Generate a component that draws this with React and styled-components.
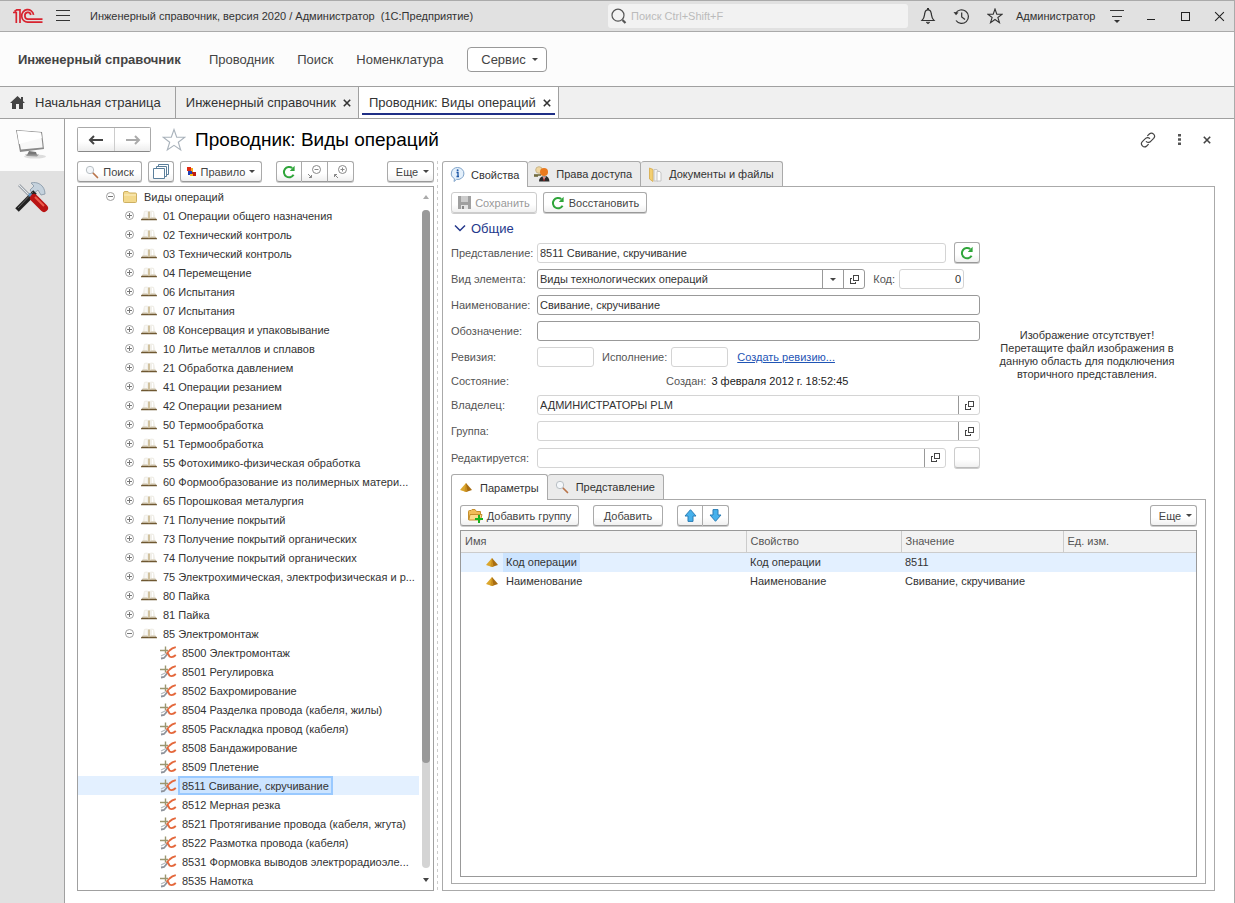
import React from "react";
import styled, { createGlobalStyle, css } from "styled-components";

const folders = [
  "01 Операции общего назначения",
  "02 Технический контроль",
  "03 Технический контроль",
  "04 Перемещение",
  "06 Испытания",
  "07 Испытания",
  "08 Консервация и упаковывание",
  "10 Литье металлов и сплавов",
  "21 Обработка давлением",
  "41 Операции резанием",
  "42 Операции резанием",
  "50 Термообработка",
  "51 Термообработка",
  "55 Фотохимико-физическая обработка",
  "60 Формообразование из полимерных матери...",
  "65 Порошковая металургия",
  "71 Получение покрытий",
  "73 Получение покрытий органических",
  "74 Получение покрытий органических",
  "75 Электрохимическая, электрофизическая и р...",
  "80 Пайка",
  "81 Пайка",
  "85 Электромонтаж",
];

const operations = [
  "8500 Электромонтаж",
  "8501 Регулировка",
  "8502 Бахромирование",
  "8504 Разделка провода (кабеля, жилы)",
  "8505 Раскладка провод (кабеля)",
  "8508 Бандажирование",
  "8509 Плетение",
  "8511 Свивание, скручивание",
  "8512 Мерная резка",
  "8521 Протягивание провода (кабеля, жгута)",
  "8522 Размотка провода (кабеля)",
  "8531 Формовка выводов электрорадиоэле...",
  "8535 Намотка",
];

const params = [
  { name: "Код операции", value: "8511", selected: true },
  { name: "Наименование", value: "Свивание, скручивание" },
];

/* ---------- icons ---------- */

const LogoIcon = () => (
  <svg width="30" height="16" viewBox="0 0 30 16" fill="none" stroke="#d8232f" strokeWidth="1.7">
    <path d="M0 4.500H3.300V15M1.500 3.500 4 1.600M7 15V1.800H3.500" />
    <path d="M20.600 6.800A6 6.300 0 1 0 15 14.200H29.500" />
    <path d="M17.800 7A3 3.400 0 1 0 15 11.200H29.500" />
  </svg>
);

const BurgerIcon = () => (
  <svg width="14" height="12" viewBox="0 0 14 12" stroke="#333" shapeRendering="crispEdges">
    <path d="M0 .5H14M0 5.500H14M0 10.500H14" />
  </svg>
);

const LensIcon = () => (
  <svg width="16" height="16" viewBox="0 0 16 16" fill="none" stroke="#555">
    <circle cx="7" cy="7.200" r="6" strokeWidth="1.200" />
    <path d="M11.500 12 14.500 15" strokeWidth="2.200" />
  </svg>
);

const BellIcon = () => (
  <svg width="16" height="18" viewBox="0 0 16 18" fill="none" stroke="#333" strokeWidth="1.200">
    <path d="M2 13.500C4.500 11 4.300 9 4.700 6.700 5 4.200 6.500 2.800 8 2.800s3 1.400 3.300 3.900C11.700 9 11.500 11 14 13.500Z" />
    <path d="M6 15.200H10L8 17Z" fill="#333" strokeWidth=".5" />
    <path d="M8 1V3" strokeWidth="2" />
  </svg>
);

const HistoryIcon = () => (
  <svg width="17" height="17" viewBox="0 0 17 17" fill="none" stroke="#333" strokeWidth="1.200">
    <path d="M2.600 5.500A6.800 6.800 0 1 1 3 12.500" />
    <path d="M8.700 4.500V9L12 11.500" />
    <path d="M.5 4 3 7.200 5.500 4.500Z" fill="#333" stroke="none" />
  </svg>
);

const StarIcon = ({ size, color }) => (
  <svg width={size} height={size} viewBox="0 0 24 24" fill="none" stroke={color}>
    <path
      strokeWidth="1.1"
      vectorEffect="non-scaling-stroke"
      d="M12 1.500 14.700 9.200 22.800 9.300 16.300 14.200 18.700 22 12 17.300 5.300 22 7.700 14.200 1.200 9.300 9.300 9.200Z"
    />
  </svg>
);

const FilterIcon = () => (
  <svg width="16" height="14" viewBox="0 0 16 14" shapeRendering="crispEdges">
    <path d="M1 1.500H15M3 7.500H13" stroke="#333" />
    <path d="M5 11H11L8 14Z" fill="#333" shapeRendering="auto" />
  </svg>
);

const MinIcon = () => (
  <svg width="10" height="10" viewBox="0 0 10 10">
    <path d="M1 8.500H9" stroke="#222" shapeRendering="crispEdges" />
  </svg>
);

const MaxIcon = () => (
  <svg width="10" height="10" viewBox="0 0 10 10">
    <rect x="1.500" y="1.500" width="8" height="8" fill="none" stroke="#222" shapeRendering="crispEdges" />
  </svg>
);

const CrossIcon = ({ size = 10, width = 1, color = "#333" }) => (
  <svg width={size} height={size} viewBox="0 0 10 10" stroke={color} strokeWidth={width}>
    <path d="M1 1 9 9M9 1 1 9" />
  </svg>
);

const HomeIcon = () => (
  <svg width="15" height="13" viewBox="0 0 15 13" fill="#444">
    <path d="M7.500 0 15 7H13V13H9V8H6V13H2V7H0Z" />
    <path d="M11 1H13V5H11Z" />
  </svg>
);

const LinkIcon = () => (
  <svg width="16" height="16" viewBox="0 0 24 24" fill="none" stroke="#444" strokeWidth="1.800" strokeLinecap="round">
    <path d="M9.500 14.500a4.500 4.500 0 0 0 6.500-.500l4.500-4.500a4.600 4.600 0 0 0-6.500-6.500l-2.500 2.500" />
    <path d="M14.500 9.500a4.500 4.500 0 0 0-6.500.500l-4.500 4.500a4.600 4.600 0 0 0 6.500 6.500l2.500-2.500" />
  </svg>
);

const DotsIcon = () => (
  <svg width="3" height="11" viewBox="0 0 3 11" fill="#555">
    <path d="M0 0h3v2.500h-3zM0 4.200h3v2.500h-3zM0 8.400h3v2.500h-3z" />
  </svg>
);

const ArrowIcon = ({ color, flip }) => (
  <svg width="16" height="12" viewBox="0 0 16 12" fill="none" stroke={color} strokeWidth="2">
    {flip ? <path d="M1 6H14M10 2 14 6 10 10" /> : <path d="M15 6H2M6 2 2 6 6 10" />}
  </svg>
);

const MonitorIcon = () => (
  <svg width="34" height="34" viewBox="0 0 34 34">
    <ellipse cx="20" cy="28.500" rx="11" ry="2" fill="#ddd" />
    <path d="M14 23 21 24 22 27 12 27Z" fill="#777" />
    <path d="M10 26.500 24 26.500 22 28.500 12 28Z" fill="#999" />
    <path d="M1 2 27 4 29 21 5 24Z" fill="#8a8a8a" />
    <path d="M2 2.800 26 4.800 27.700 19.600 6 21.600Z" fill="#f8f8f8" />
    <path d="M2 2.800 26 4.800 26.800 10 4 16Z" fill="#fff" />
  </svg>
);

const ToolsIcon = () => (
  <svg width="34" height="32" viewBox="0 0 34 32" fill="none">
    <path d="M4 4 16 16" stroke="#a3a9af" strokeWidth="3" />
    <path d="M4 4 16 16" stroke="#e6eaee" strokeWidth="1" />
    <path d="M16 2C22 0 30 4 30 13L26 14 23 9 18 13 15 9 19 5Z" fill="#c5d2dd" stroke="#93a2b0" />
    <path d="M20 11 2 29" stroke="#222" strokeWidth="5" />
    <path d="M18 11 3 27" stroke="#666" strokeWidth="1" />
    <path d="M14 13 20 18" stroke="#5b95c7" strokeWidth="3" />
    <path d="M19 17 29 27" stroke="#b91414" strokeWidth="8" strokeLinecap="round" />
    <path d="M20 16 29 25" stroke="#ee5c4c" strokeWidth="2" />
  </svg>
);

const MagnifierIcon = () => (
  <svg width="14" height="14" viewBox="0 0 14 14" fill="none">
    <path d="M8 8 12.500 12.500" stroke="#b9744a" strokeWidth="1.700" strokeLinecap="round" />
    <circle cx="5" cy="5" r="3.700" fill="#f4f7fa" stroke="#b8bfc4" />
  </svg>
);

const CopiesIcon = () => (
  <svg width="16" height="15" viewBox="0 0 16 15" fill="#fff" stroke="#5b7f9b">
    <path d="M5.500.500H15.500V10.500H5.500Z" />
    <path d="M3.500 2.500H13.500V12.500H3.500Z" />
    <path d="M.500 4.500H11.500V14.500H.500Z" />
  </svg>
);

const RuleIcon = () => (
  <svg width="10" height="10" viewBox="0 0 10 10">
    <path d="M0 0H4V4H0Z" fill="#e02a12" />
    <path d="M4 1H6V5H4Z" fill="#f6a51a" />
    <path d="M1 4H5V8H1Z" fill="#1f3fb4" />
    <path d="M5 5H9V9H5Z" fill="#c01c10" />
    <path d="M3 7H6V9H3Z" fill="#f5b916" />
  </svg>
);

const RefreshIcon = () => (
  <svg width="14" height="14" viewBox="0 0 14 14" fill="none">
    <path d="M11.600 9.800A5.200 5.200 0 1 1 10.300 3" stroke="#2fa53a" strokeWidth="2" />
    <path d="M12.600.800V6H7.800Z" fill="#2fa53a" />
  </svg>
);

const FoldIcon = ({ plus }) => (
  <svg width="15" height="15" viewBox="0 0 15 15" fill="none" stroke="#888">
    <circle cx="9.500" cy="5.500" r="4" />
    <path d={plus ? "M7.500 5.500H11.500M9.500 3.500V7.500" : "M7.500 5.500H11.500"} />
    <path d={plus ? "M5 14 1.500 10.500M1.500 13V10.500H4" : "M1 10 4.500 13.500M4.500 11V13.500H2"} />
  </svg>
);

const ToggleIcon = ({ open }) => (
  <svg width="9" height="9" viewBox="0 0 9 9" fill="none" stroke="#a0a0a0">
    <circle cx="4.500" cy="4.500" r="4" />
    <path stroke="#777" shapeRendering="crispEdges" d={open ? "M2 4.500H7" : "M2 4.500H7M4.500 2V7"} />
  </svg>
);

const FolderIcon = () => (
  <svg width="14" height="12" viewBox="0 0 14 12">
    <path d="M.500 2Q.500.500 2 .500H5L6.500 2H12.500Q13.500 2 13.500 3V10.500Q13.500 11.500 12.500 11.500H1.500Q.500 11.500.500 10.500Z" fill="#f3d98c" stroke="#cdb063" />
    <path d="M1 4H13" stroke="#fbeec4" />
  </svg>
);

const BookIcon = () => (
  <svg width="16" height="11" viewBox="0 0 16 11">
    <path d="M1.500 8 3 1Q6 0 8 1.500 10 0 13 1L14.500 8Z" fill="#f1efe9" />
    <path d="M8 1.500V9" stroke="#c9b68c" strokeWidth="1.600" />
    <path d="M5 2V7.500M11.500 2V7.500" stroke="#fff" />
    <path d="M0 9.500 1 8.500H6.500L8 9.300 9.500 8.500H15L16 9.500V10.300H0Z" fill="#6e5730" />
    <path d="M1.500 8H6.500M9.500 8H14.500" stroke="#cfc3a8" />
  </svg>
);

const WireIcon = () => (
  <svg width="17" height="14" viewBox="0 0 17 14" fill="none">
    <path d="M0 4.500H8M5.500.500V7" stroke="#9b9670" strokeWidth="1.400" />
    <path d="M1 12.500 4 12 7.500 8" stroke="#8d929a" strokeWidth="1.800" />
    <path d="M1 10 6 7.500" stroke="#b4b8bc" strokeWidth="1.200" />
    <path d="M15.800 1.200Q12 2 9.500 4.500L6.500 7.800M15.800 9Q12.500 12.200 9.500 10.500L8 7.500" stroke="#e4683c" strokeWidth="1.800" />
  </svg>
);

const InfoIcon = () => (
  <svg width="15" height="15" viewBox="0 0 15 15">
    <path d="M7.500.500A6.300 6 0 1 1 6.500 12.400L4 14.500 4.500 11.700A6.300 6 0 0 1 7.500.500Z" fill="#e4f0fb" stroke="#7fa3c9" />
    <path d="M6.500 5.500H8V9.500H9M6.500 9.500H8" stroke="#1b55a5" strokeWidth="1.300" fill="none" />
    <circle cx="7.600" cy="3.300" r="1" fill="#1b55a5" />
  </svg>
);

const UserIcon = () => (
  <svg width="16" height="16" viewBox="0 0 16 16">
    <circle cx="5" cy="4" r="3.300" fill="#f0d6a0" stroke="#c9b68a" />
    <path d="M5 15.500Q5 10.500 10 10T15.500 15.500Z" fill="#2b2b2b" />
    <circle cx="10" cy="6" r="4" fill="#e97a1e" />
    <path d="M8.500 10.500 10 14 12 10.500Z" fill="#fff" />
    <path d="M0 9H7M1 9V11M3 9V11" stroke="#6b6333" strokeWidth="1.500" />
    <path d="M10 11V15" stroke="#c21c1c" />
  </svg>
);

const FilesIcon = () => (
  <svg width="13" height="15" viewBox="0 0 13 15">
    <path d="M.500 1 4 2.500V14.500L.500 12Z" fill="#f3cf72" stroke="#dbb35a" />
    <path d="M5 2.500H8L9 4V14H5Z" fill="#f3f3f3" stroke="#c4c4c4" />
    <path d="M8 4.500H11L12 6V14H8Z" fill="#fff" stroke="#c4c4c4" />
  </svg>
);

const SaveIcon = () => (
  <svg width="13" height="13" viewBox="0 0 13 13">
    <path d="M0 0H13V13H0Z" fill="#a0a0a0" />
    <path d="M3 0H10V6H3Z" fill="#ccc" />
    <path d="M3 9H10V13H3Z" fill="#e4e4e4" />
    <path d="M4 10H6V13H4Z" fill="#888" />
  </svg>
);

const ChevronIcon = () => (
  <svg width="12" height="8" viewBox="0 0 12 8" fill="none" stroke="#24388c" strokeWidth="1.500">
    <path d="M1 1.500 6 6.500 11 1.500" />
  </svg>
);

const OpenIcon = () => (
  <svg width="9" height="9" viewBox="0 0 9 9" fill="none" stroke="#444" shapeRendering="crispEdges">
    <path d="M3.500.500H8.500V5.500H3.500Z" />
    <path d="M2 3.500H.500V8.500H5.500V7" />
  </svg>
);

const PyramidIcon = () => (
  <svg width="12" height="9" viewBox="0 0 12 9">
    <path d="M6 0 0 7 6 9Z" fill="#dba62c" />
    <path d="M6 0 6 9 12 7Z" fill="#a86d12" />
    <path d="M6 0 4.500 8.500 7.500 8.500Z" fill="#c98f1f" />
  </svg>
);

const AddGroupIcon = () => (
  <svg width="15" height="14" viewBox="0 0 15 14">
    <path d="M.500 2.500Q.500 1.500 1.500 1.500H3L4 .500H7L8.500 2.500H12.500V10.500H.500Z" fill="#f0bc58" stroke="#c58f2d" />
    <path d="M2 5.500H14L12.500 11H.800Z" fill="#fbdc8c" stroke="#c58f2d" />
    <path d="M11 6V14M7 10H15" stroke="#19b21e" strokeWidth="2" />
  </svg>
);

const BlueArrowIcon = ({ down }) => (
  <svg width="13" height="13" viewBox="0 0 13 13">
    <path
      d={down ? "M4 .600H9V6H12L6.500 12.300 1 6H4Z" : "M4 12.400H9V7H12L6.500.700 1 7H4Z"}
      fill="#46b1ec"
      stroke="#2a7db5"
    />
  </svg>
);

/* ---------- shared parts ---------- */

const SearchField = ({ placeholder }) => (
  <SearchBox>
    <LensIcon />
    <input aria-label="Поиск" placeholder={placeholder} />
  </SearchBox>
);

const TreeItem = ({ level, icon, toggle, label, selected }) => (
  <TreeRow $level={level} $selected={selected} role="treeitem" aria-selected={!!selected}>
    {toggle && (
      <Toggle aria-label={toggle === "open" ? "Свернуть" : "Развернуть"}>
        <ToggleIcon open={toggle === "open"} />
      </Toggle>
    )}
    <TreeIcon>{icon}</TreeIcon>
    <TreeLabel $selected={selected}>{label}</TreeLabel>
  </TreeRow>
);

const OpenField = ({ id, value = "" }) => (
  <FieldGroup>
    <input id={id} defaultValue={value} />
    <FieldButton aria-label="Открыть">
      <OpenIcon />
    </FieldButton>
  </FieldGroup>
);

const TabButton = ({ icon, active, children }) => (
  <Tab $active={active}>
    <TabIcon>{icon}</TabIcon>
    {children}
  </Tab>
);

function TitleBar() {
  return (
    <TopBar>
      <LogoIcon />
      <BareButton aria-label="Меню">
        <BurgerIcon />
      </BareButton>
      <AppName>
        Инженерный справочник, версия 2020 / Администратор&nbsp; (1С:Предприятие)
      </AppName>
      <SearchField placeholder="Поиск Ctrl+Shift+F" />
      <TopTools>
        <BareButton aria-label="Уведомления">
          <BellIcon />
        </BareButton>
        <BareButton aria-label="История">
          <HistoryIcon />
        </BareButton>
        <BareButton aria-label="Избранное">
          <StarIcon size={16} color="#333" />
        </BareButton>
      </TopTools>
      <UserName>Администратор</UserName>
      <BareButton aria-label="Настройки">
        <FilterIcon />
      </BareButton>
      <WindowTools>
        <BareButton aria-label="Свернуть окно">
          <MinIcon />
        </BareButton>
        <BareButton aria-label="Развернуть окно">
          <MaxIcon />
        </BareButton>
        <BareButton aria-label="Закрыть окно">
          <CrossIcon size={11} color="#222" />
        </BareButton>
      </WindowTools>
    </TopBar>
  );
}

function TreePane() {
  return (
    <LeftPane>
      <Toolbar>
        <Button $width={65}>
          <MagnifierIcon />
          Поиск
        </Button>
        <Button $width={26} aria-label="Копии">
          <CopiesIcon />
        </Button>
        <Button $width={82}>
          <RuleIcon />
          Правило
          <Caret />
        </Button>
        <ButtonGroup $start>
          <Button $width={26} aria-label="Обновить">
            <RefreshIcon />
          </Button>
          <Button $width={26} aria-label="Свернуть все">
            <FoldIcon />
          </Button>
          <Button $width={26} aria-label="Развернуть все">
            <FoldIcon plus />
          </Button>
        </ButtonGroup>
        <MoreButton $width={47}>
          Еще
          <Caret />
        </MoreButton>
      </Toolbar>
      <TreeBox>
        <Tree role="tree" aria-label="Виды операций">
          <TreeItem level={0} toggle="open" icon={<FolderIcon />} label="Виды операций" />
          {folders.map((label, i) => (
            <TreeItem
              key={label}
              level={1}
              toggle={i === folders.length - 1 ? "open" : "closed"}
              icon={<BookIcon />}
              label={label}
            />
          ))}
          {operations.map((label) => (
            <TreeItem
              key={label}
              level={2}
              icon={<WireIcon />}
              label={label}
              selected={label.startsWith("8511")}
            />
          ))}
        </Tree>
        <Scroll>
          <ScrollArrow $up />
          <ScrollTrack>
            <ScrollThumb />
          </ScrollTrack>
          <ScrollArrow />
        </Scroll>
      </TreeBox>
    </LeftPane>
  );
}

function PropertiesForm() {
  return (
    <FormArea>
      <Fields>
        <Row>
          <Label htmlFor="view">Представление:</Label>
          <Input id="view" $soft defaultValue="8511 Свивание, скручивание" />
          <SideFieldButton $width={26} aria-label="Обновить представление">
            <RefreshIcon />
          </SideFieldButton>
        </Row>
        <Row>
          <Label htmlFor="kind">Вид элемента:</Label>
          <FieldGroup $dark>
            <select id="kind">
              <option>Виды технологических операций</option>
            </select>
            <FieldButton aria-label="Выбрать">
              <Caret />
            </FieldButton>
            <FieldButton aria-label="Открыть">
              <OpenIcon />
            </FieldButton>
          </FieldGroup>
          <InlineLabel htmlFor="code">Код:</InlineLabel>
          <CodeInput id="code" $soft defaultValue="0" />
        </Row>
        <Row>
          <Label htmlFor="name">Наименование:</Label>
          <Input id="name" defaultValue="Свивание, скручивание" />
        </Row>
        <Row>
          <Label htmlFor="mark">Обозначение:</Label>
          <Input id="mark" />
        </Row>
        <Row>
          <Label htmlFor="rev">Ревизия:</Label>
          <ShortInput id="rev" $soft />
          <InlineLabel htmlFor="exec">Исполнение:</InlineLabel>
          <ShortInput id="exec" $soft />
          <Link href="#">Создать ревизию...</Link>
        </Row>
        <StateRow>
          <span>Состояние:</span>
          <span>Создан:</span>
          <time dateTime="2012-02-03T18:52:45">3 февраля 2012 г. 18:52:45</time>
        </StateRow>
        <Row>
          <Label htmlFor="owner">Владелец:</Label>
          <OpenField id="owner" value="АДМИНИСТРАТОРЫ PLM" />
        </Row>
        <Row>
          <Label htmlFor="group">Группа:</Label>
          <OpenField id="group" />
        </Row>
        <Row>
          <Label htmlFor="edited">Редактируется:</Label>
          <OpenField id="edited" />
          <SideFieldButton $width={26} $muted aria-label="Освободить" />
        </Row>
      </Fields>
      <NoImage>
        Изображение отсутствует!
        <br />
        Перетащите файл изображения в
        <br />
        данную область для подключения
        <br />
        вторичного представления.
      </NoImage>
    </FormArea>
  );
}

function ParamsPanel() {
  return (
    <>
      <Tabs>
        <TabButton active icon={<PyramidIcon />}>
          Параметры
        </TabButton>
        <TabButton icon={<MagnifierIcon />}>Представление</TabButton>
      </Tabs>
      <InnerPanel>
        <ParamsToolbar>
          <Button $width={119}>
            <AddGroupIcon />
            Добавить группу
          </Button>
          <Button $width={70}>Добавить</Button>
          <ButtonGroup>
            <Button $width={26} aria-label="Вверх">
              <BlueArrowIcon />
            </Button>
            <Button $width={26} aria-label="Вниз">
              <BlueArrowIcon down />
            </Button>
          </ButtonGroup>
          <MoreButton $width={47}>
            Еще
            <Caret />
          </MoreButton>
        </ParamsToolbar>
        <TableBox>
          <Table>
            <colgroup>
              <col width="285" />
              <col width="155" />
              <col width="162" />
              <col />
            </colgroup>
            <thead>
              <tr>
                <th>Имя</th>
                <th>Свойство</th>
                <th>Значение</th>
                <th>Ед. изм.</th>
              </tr>
            </thead>
            <tbody>
              {params.map((p) => (
                <ParamRow key={p.name} $selected={p.selected}>
                  <td>
                    <NameCell>
                      <PyramidIcon />
                      <span>{p.name}</span>
                    </NameCell>
                  </td>
                  <td>{p.name}</td>
                  <td>{p.value}</td>
                  <td />
                </ParamRow>
              ))}
            </tbody>
          </Table>
        </TableBox>
      </InnerPanel>
    </>
  );
}

function App() {
  return (
    <Page>
      <GlobalStyle />
      <TitleBar />
      <MenuBar>
        <a href="#">Инженерный справочник</a>
        <a href="#">Проводник</a>
        <a href="#">Поиск</a>
        <a href="#">Номенклатура</a>
        <ServiceButton>
          Сервис
          <Caret />
        </ServiceButton>
      </MenuBar>
      <WindowTabs>
        <WindowTab>
          <HomeIcon />
          <span>Начальная страница</span>
        </WindowTab>
        <WindowTab>
          <span>Инженерный справочник</span>
          <CrossIcon size={8} width={2} />
        </WindowTab>
        <WindowTab $active>
          <span>Проводник: Виды операций</span>
          <CrossIcon size={8} width={2} />
        </WindowTab>
      </WindowTabs>
      <Body>
        <SideBar>
          <SideButton $active aria-label="Рабочий стол">
            <MonitorIcon />
          </SideButton>
          <SideButton aria-label="Инструменты">
            <ToolsIcon />
          </SideButton>
        </SideBar>
        <Main>
          <TitleRow>
            <NavButtons>
              <button aria-label="Назад">
                <ArrowIcon color="#444" />
              </button>
              <button aria-label="Вперед">
                <ArrowIcon color="#aaa" flip />
              </button>
            </NavButtons>
            <BareButton aria-label="В избранное">
              <StarIcon size={24} color="#a9b2bb" />
            </BareButton>
            <h1>Проводник: Виды операций</h1>
            <TitleTools>
              <BareButton aria-label="Ссылка">
                <LinkIcon />
              </BareButton>
              <BareButton aria-label="Еще">
                <DotsIcon />
              </BareButton>
              <BareButton aria-label="Закрыть">
                <CrossIcon size={8} width={2} color="#444" />
              </BareButton>
            </TitleTools>
          </TitleRow>
          <Split>
            <TreePane />
            <Splitter />
            <RightPane>
              <Tabs>
                <TabButton active icon={<InfoIcon />}>
                  Свойства
                </TabButton>
                <TabButton icon={<UserIcon />}>Права доступа</TabButton>
                <TabButton icon={<FilesIcon />}>Документы и файлы</TabButton>
              </Tabs>
              <OuterPanel>
                <FormToolbar>
                  <Button $width={86} disabled>
                    <SaveIcon />
                    Сохранить
                  </Button>
                  <Button $width={104}>
                    <RefreshIcon />
                    Восстановить
                  </Button>
                </FormToolbar>
                <GroupTitle>
                  <ChevronIcon />
                  Общие
                </GroupTitle>
                <PropertiesForm />
                <ParamsPanel />
              </OuterPanel>
            </RightPane>
          </Split>
        </Main>
      </Body>
    </Page>
  );
}

/* ---------- styles ---------- */

const GlobalStyle = createGlobalStyle`
  * {
    box-sizing: border-box;
  }
  body {
    margin: 0;
    background: #fff;
  }
  body, button, input, select {
    font-family: "Liberation Sans", Arial, sans-serif;
    font-size: 11px;
    color: #333;
  }
  svg {
    display: block;
    flex: none;
  }
`;

const Page = styled.div`
  display: flex;
  flex-direction: column;
  min-height: 100vh;
  border-right: 1px solid #aaa;
`;

const BareButton = styled.button`
  display: flex;
  align-items: center;
  justify-content: center;
  padding: 0;
  border: none;
  background: none;
`;

const TopBar = styled.header`
  display: flex;
  align-items: center;
  height: 32px;
  padding: 0 9px 0 13px;
  background: #e1e1e1;
  border-top: 1px solid #aaa;
  border-bottom: 1px solid #aaa;

  & > svg {
    margin-right: 13px;
  }
`;

const AppName = styled.span`
  flex: 1;
  margin-left: 20px;
  white-space: nowrap;
`;

const SearchBox = styled.label`
  display: flex;
  align-items: center;
  width: 300px;
  height: 24px;
  padding-left: 3px;
  background: #f2f2f2;
  border-radius: 3px;

  & input {
    flex: 1;
    min-width: 0;
    padding: 0 4px;
    border: none;
    background: none;
  }
  & input::placeholder {
    color: #bbb;
  }
`;

const TopTools = styled.div`
  display: flex;
  align-items: center;
  gap: 17px;
  margin: 0 13px 0 12px;
`;

const UserName = styled.span`
  width: 93px;
  white-space: nowrap;
`;

const WindowTools = styled.div`
  display: flex;
  align-items: center;
  gap: 24px;
  margin-left: 21px;
`;

const MenuBar = styled.nav`
  display: flex;
  align-items: center;
  gap: 23px;
  height: 55px;
  padding: 0 18px;
  background: #fcfcfc;
  border-bottom: 1px solid #a0a0a0;

  & a {
    font-size: 13px;
    color: #444;
    text-decoration: none;
  }
  & a:first-child {
    min-width: 168px;
    font-weight: bold;
  }
`;

const Caret = styled.span`
  border: 3px solid transparent;
  border-top-color: #444;
  border-bottom: none;
`;

const ServiceButton = styled.button`
  display: flex;
  align-items: center;
  justify-content: center;
  gap: 6px;
  width: 80px;
  height: 25px;
  padding: 0 0 0 6px;
  border: 1px solid #999;
  border-radius: 4px;
  background: #fff;
  font-size: 13px;
  color: #444;
`;

const WindowTabs = styled.nav`
  display: flex;
  height: 32px;
  background: #f0f0f0;
  border-bottom: 1px solid #a0a0a0;
`;

const WindowTab = styled.button`
  display: flex;
  align-items: center;
  gap: 7px;
  padding: 0 7px 0 10px;
  border: none;
  border-right: 1px solid #a0a0a0;
  background: ${(p) => (p.$active ? "#fff" : "none")};
  box-shadow: ${(p) =>
    p.$active ? "inset 3px 0 #fff, inset -3px 0 #fff, inset 0 -3px #fff, inset 0 -5px #1f2f86" : "none"};
  font-size: 13px;
  white-space: nowrap;

  &:first-child {
    gap: 10px;
    padding-right: 14px;
  }
`;

const Body = styled.div`
  display: flex;
  flex: 1;
`;

const SideBar = styled.aside`
  width: 65px;
  background: #e1e1e1;
  border-right: 1px solid #a0a0a0;
`;

const SideButton = styled.button`
  display: flex;
  align-items: center;
  justify-content: center;
  width: 100%;
  height: 52px;
  padding: 0;
  border: none;
  background: ${(p) => (p.$active ? "#fcfcfc" : "none")};
`;

const Main = styled.main`
  display: flex;
  flex: 1;
  flex-direction: column;
  min-width: 0;
  padding: 8px 19px 12px 12px;
`;

const TitleRow = styled.div`
  display: flex;
  align-items: center;
  height: 25px;
  margin-bottom: 9px;

  & > button {
    margin: 0 9px 0 11px;
  }
  & h1 {
    margin: 0;
    font-size: 19px;
    font-weight: normal;
    color: #000;
  }
`;

const NavButtons = styled.div`
  display: flex;
  height: 25px;
  border: 1px solid #aaa;
  border-bottom-color: #888;
  border-radius: 2px;

  & button {
    display: flex;
    align-items: center;
    justify-content: center;
    width: 36px;
    padding: 0;
    border: none;
    background: linear-gradient(#fff 60%, #ededed);
  }
  & button + button {
    border-left: 1px solid #ccc;
  }
`;

const TitleTools = styled.div`
  display: flex;
  align-items: center;
  gap: 22px;
  margin-left: auto;
  padding-right: 4px;
`;

const Split = styled.div`
  display: flex;
  flex: 1;
`;

const LeftPane = styled.section`
  display: flex;
  flex: none;
  flex-direction: column;
  width: 357px;
`;

const Toolbar = styled.div`
  display: flex;
  height: 25px;
  gap: 6px;
`;

const Button = styled.button`
  display: flex;
  flex: none;
  align-items: center;
  justify-content: center;
  gap: 4px;
  width: ${(p) => p.$width}px;
  height: 21px;
  padding: 0;
  border: 1px solid ${(p) => (p.$muted ? "#ccc" : "#aaa")};
  border-bottom-color: ${(p) => (p.$muted ? "#bbb" : "#999")};
  border-radius: 3px;
  background: linear-gradient(#fff 60%, #f0f0f0);
  box-shadow: 0 1px #ccc;
  color: #444;
  white-space: nowrap;

  &:disabled {
    border-color: #ccc;
    color: #999;
  }
`;

const MoreButton = styled(Button)`
  gap: 5px;
  margin-left: auto;
  padding-left: 4px;
`;

const SideFieldButton = styled(Button)`
  margin-left: 8px;
`;

const ButtonGroup = styled.div`
  display: flex;
  margin-left: ${(p) => (p.$start ? "8px" : "0")};

  & ${Button}:first-child {
    border-radius: 3px 0 0 3px;
  }
  & ${Button}:last-child {
    border-radius: 0 3px 3px 0;
  }
  & ${Button}:not(:last-child):not(:first-child) {
    border-radius: 0;
  }
  & ${Button} + ${Button} {
    border-left: none;
  }
`;

const TreeBox = styled.div`
  display: flex;
  flex: 1;
  border: 1px solid #a0a0a0;
`;

const Tree = styled.ul`
  flex: 1;
  min-width: 0;
  margin: 0;
  padding: 0;
  list-style: none;
`;

const TreeRow = styled.li`
  display: flex;
  align-items: center;
  height: 19px;
  padding-left: ${(p) => [28, 47, 81][p.$level]}px;
  background: ${(p) => (p.$selected ? "#e3f0ff" : "none")};
  white-space: nowrap;
`;

const Toggle = styled(BareButton)`
  width: 9px;
  margin-right: 6px;
`;

const TreeIcon = styled.span`
  display: flex;
  justify-content: center;
  width: 18px;
`;

const TreeLabel = styled.span`
  height: 19px;
  margin-left: 1px;
  padding: 0 2px;
  border: 2px solid transparent;
  line-height: 16px;
  ${(p) =>
    p.$selected &&
    css`
      border-color: #99c9ff;
      background: #cce4ff;
    `}
`;

const Scroll = styled.div`
  display: flex;
  flex: none;
  flex-direction: column;
  align-items: center;
  width: 14px;
  padding: 8px 0;
`;

const ScrollArrow = styled.span`
  border: 3px solid transparent;
  ${(p) =>
    p.$up
      ? "border-top: none; border-bottom: 4px solid #aaa;"
      : "border-bottom: none; border-top: 4px solid #444;"}
`;

const ScrollTrack = styled.div`
  flex: 1;
  width: 8px;
  margin: 11px 0 10px;
  border-radius: 4px;
  background: #d4d4d4;
`;

const ScrollThumb = styled.div`
  height: 84%;
  border-radius: 4px;
  background: #999;
`;

const Splitter = styled.div`
  width: 8px;
  background: repeating-linear-gradient(#ccc 0 3px, transparent 3px 6px) 3px 0 / 1px 100% no-repeat;
`;

const RightPane = styled.section`
  display: flex;
  flex: 1;
  flex-direction: column;
  min-width: 0;
`;

const Tabs = styled.div`
  display: flex;
  height: 25px;
`;

const Tab = styled.button`
  display: flex;
  align-items: center;
  gap: 6px;
  height: ${(p) => (p.$active ? "26px" : "25px")};
  padding: 0 8px 0 6px;
  border: 1px solid #aaa;
  border-bottom: none;
  border-radius: 3px 3px 0 0;
  background: ${(p) => (p.$active ? "#fff" : "#ebebeb")};
  white-space: nowrap;
  z-index: 1;

  & + & {
    border-left: none;
  }
`;

const TabIcon = styled.span`
  display: flex;
  justify-content: center;
  width: 16px;
`;

const OuterPanel = styled.div`
  display: flex;
  flex: 1;
  flex-direction: column;
  padding: 5px 8px 6px;
  border: 1px solid #aaa;
`;

const FormToolbar = styled.div`
  display: flex;
  gap: 6px;
  height: 22px;
`;

const GroupTitle = styled.h2`
  display: flex;
  align-items: center;
  gap: 5px;
  height: 28px;
  margin: 0;
  padding-left: 3px;
  font-size: 13px;
  font-weight: normal;
  color: #24388c;
`;

const FormArea = styled.div`
  display: flex;
  margin-bottom: 6px;
  padding-right: 12px;
`;

const Fields = styled.div`
  display: flex;
  flex: none;
  flex-direction: column;
  gap: 6px;
  width: 529px;
`;

const Row = styled.div`
  display: flex;
  align-items: center;
  min-height: 20px;
`;

const Label = styled.label`
  flex: none;
  width: 86px;
  color: #555;
  white-space: nowrap;
`;

const InlineLabel = styled.label`
  margin: 0 4px 0 8px;
  color: #555;
`;

const Input = styled.input`
  flex: 1;
  min-width: 0;
  height: 20px;
  padding: 0 2px;
  border: 1px solid ${(p) => (p.$soft ? "#d4d4d4" : "#999")};
  border-radius: 3px;
  background: #fff;
`;

const CodeInput = styled(Input)`
  flex: none;
  width: 65px;
  margin-right: 16px;
  text-align: right;
`;

const ShortInput = styled(Input)`
  flex: none;
  width: 57px;
`;

const FieldGroup = styled.div`
  display: flex;
  flex: 1;
  height: 20px;
  border: 1px solid ${(p) => (p.$dark ? "#999" : "#d4d4d4")};
  border-radius: 3px;
  background: #fff;

  & input,
  & select {
    flex: 1;
    min-width: 0;
    padding: 0 2px;
    border: none;
    background: none;
    appearance: none;
  }
`;

const FieldButton = styled(BareButton)`
  width: 21px;
  border-left: 1px solid #999;
`;

const Link = styled.a`
  margin-left: 9px;
  color: #1f55b5;
`;

const StateRow = styled.div`
  display: flex;
  align-items: center;
  height: 16px;
  color: #555;

  & span:first-child {
    width: 215px;
  }
  & time {
    margin-left: 5px;
    color: #222;
  }
`;

const NoImage = styled.p`
  flex: 1;
  align-self: center;
  margin: 0;
  line-height: 13px;
  text-align: center;
  white-space: nowrap;
`;

const InnerPanel = styled.div`
  display: flex;
  flex: 1;
  flex-direction: column;
  padding: 5px 8px 6px;
  border: 1px solid #aaa;
`;

const ParamsToolbar = styled.div`
  display: flex;
  gap: 14px;
  height: 25px;
`;

const TableBox = styled.div`
  flex: 1;
  border: 1px solid #999;
`;

const Table = styled.table`
  width: 100%;
  border-collapse: collapse;
  table-layout: fixed;

  & th {
    height: 21px;
    padding: 0 4px;
    border-right: 1px solid #ccc;
    border-bottom: 1px solid #ccc;
    background: #f2f2f2;
    font-weight: normal;
    text-align: left;
    color: #555;
  }
  & th:last-child {
    border-right: none;
  }
  & td {
    height: 19px;
    padding: 0 4px;
  }
`;

const NameCell = styled.div`
  display: flex;
  align-items: center;
  gap: 5px;
  height: 19px;
  padding-left: 21px;

  & span {
    padding: 0 3px;
    line-height: 19px;
  }
`;

const ParamRow = styled.tr`
  background: ${(p) => (p.$selected ? "#e3f0ff" : "none")};

  & ${NameCell} span {
    background: ${(p) => (p.$selected ? "#cce4ff" : "none")};
  }
`;

export default App;
